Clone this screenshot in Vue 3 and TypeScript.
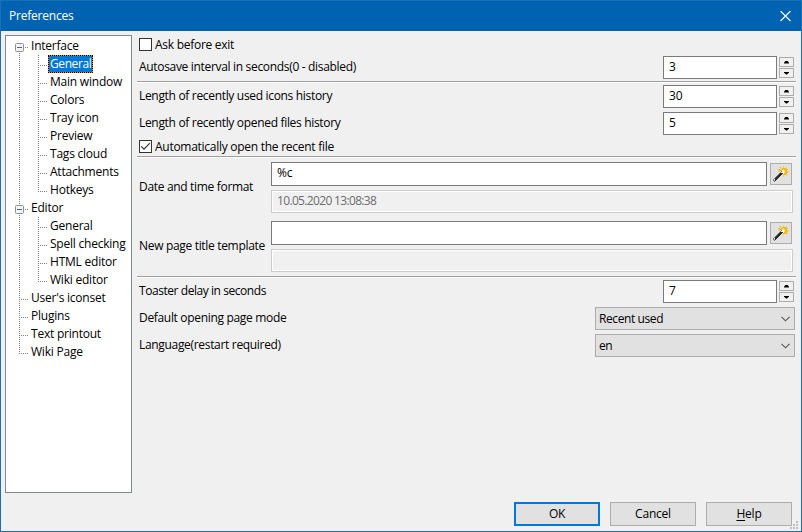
<script setup lang="ts">
interface TreeItem {
  label: string
  level: 1 | 2
  expandable?: boolean
  selected?: boolean
  lastChild?: boolean
  lastRoot?: boolean
  first?: boolean
}

const items: TreeItem[] = [
  { label: 'Interface', level: 1, expandable: true, first: true },
  { label: 'General', level: 2, selected: true },
  { label: 'Main window', level: 2 },
  { label: 'Colors', level: 2 },
  { label: 'Tray icon', level: 2 },
  { label: 'Preview', level: 2 },
  { label: 'Tags cloud', level: 2 },
  { label: 'Attachments', level: 2 },
  { label: 'Hotkeys', level: 2, lastChild: true },
  { label: 'Editor', level: 1, expandable: true },
  { label: 'General', level: 2 },
  { label: 'Spell checking', level: 2 },
  { label: 'HTML editor', level: 2 },
  { label: 'Wiki editor', level: 2, lastChild: true },
  { label: "User's iconset", level: 1 },
  { label: 'Plugins', level: 1 },
  { label: 'Text printout', level: 1 },
  { label: 'Wiki Page', level: 1, lastRoot: true },
]

const templates = [
  { label: 'Date and time format', value: '%c', preview: '10.05.2020 13:08:38' },
  { label: 'New page title template', value: '', preview: '' },
]

const selects = [
  { label: 'Default opening page mode', value: 'Recent used' },
  { label: 'Language(restart required)', value: 'en' },
]

const wand: [string, string][] = [
  ['#f5cf62', 'M10 0h1v2h-1zM6 1h1v1h-1zM13 1h1v2h-1zM5 5h2v1h-2zM14 5h2v1h-2zM13 8h1v2h-1zM10 9h1v2h-1zM7 2h1v1h-1zM14 8h1v1h-1z'],
  ['#f2b718', 'M7 1h1v1h-1zM9 2h3v1h-3zM8 3h2v1h-2zM11 3h3v1h-3zM7 4h2v1h-2zM12 4h2v1h-2zM12 5h2v1h-2zM12 6h3v1h-3zM11 7h3v1h-3zM10 8h3v1h-3zM12 2h1v1h-1zM14 3h1v1h-1zM5 3h2v1h-2zM6 4h1v1h-1z'],
  ['#ffe682', 'M10 3h1v1h-1zM9 4h3v1h-3zM11 5h1v2h-1z'],
  ['#777', 'M8 5h1v1h-1zM7 6h1v1h-1zM6 7h1v1h-1zM5 8h1v1h-1zM4 9h1v1h-1zM3 10h1v1h-1zM2 11h1v1h-1zM1 12h1v1h-1zM0 13h1v2h-1zM1 15h1v1h-1z'],
  ['#2b2b2b', 'M7 7h1v1h-1zM6 8h3v1h-3zM5 9h3v1h-3zM4 10h3v1h-3zM3 11h3v1h-3zM2 12h3v1h-3zM2 13h2v1h-2zM2 14h1v1h-1zM8 7h2v1h-2z'],
  ['#fff', 'M9 5h2v2h-2zM8 6h1v1h-1zM10 7h1v1h-1zM1 13h1v1h-1z'],
  ['#aaa', 'M1 14h1v1h-1z'],
]
</script>

<template>
  <div class="window">
    <header class="titlebar">
      <span>Preferences</span>
      <svg width="11" height="11" viewBox="0 0 11 11"><path d="M.5 0l10 10M10.5 0l-10 10" stroke="#fff" stroke-width="1.1" /></svg>
    </header>
    <main class="body">
      <nav class="tree">
        <div v-for="(item, i) in items" :key="i" class="node">
          <svg class="lines" :width="item.level === 2 ? 42 : 23" height="18">
            <path v-if="!item.first" class="dots" :d="`M13.5 0V${item.lastRoot ? 11 : 18}`" />
            <path v-else class="dots" d="M13.5 16V18" />
            <template v-if="item.level === 2">
              <path class="dots" :d="`M32.5 0V${item.lastChild ? 11 : 18}`" />
              <path class="dots" d="M34 10.5H42" />
            </template>
            <path v-else class="dots" d="M15 10.5H23" />
            <g v-if="item.expandable">
              <rect x="9.5" y="6.5" width="8" height="8" rx="1" fill="#f4f4f4" stroke="#919191" />
              <path d="M11 10.5h5" stroke="#4b63a7" />
            </g>
          </svg>
          <span class="name" :class="{ selected: item.selected }">{{ item.label }}</span>
        </div>
      </nav>

      <section class="panel">
        <label class="check"><i class="box"></i>Ask before exit</label>
        <div class="row first-row">
          <span class="label">Autosave interval in seconds(0 - disabled)</span>
          <div class="spin"><div class="field">3</div><div class="arrows"><b class="up"></b><b class="down"></b></div></div>
        </div>
        <hr />
        <div class="row">
          <span class="label">Length of recently used icons history</span>
          <div class="spin"><div class="field">30</div><div class="arrows"><b class="up"></b><b class="down"></b></div></div>
        </div>
        <div class="row">
          <span class="label">Length of recently opened files history</span>
          <div class="spin"><div class="field">5</div><div class="arrows"><b class="up"></b><b class="down"></b></div></div>
        </div>
        <label class="check second">
          <i class="box"><svg width="11" height="11" viewBox="0 0 11 11"><path d="M1.2 5.3l2.8 2.8L9.8 2.2" fill="none" stroke="#333" stroke-width="1.2" /></svg></i>Automatically open the recent file
        </label>
        <hr />
        <div v-for="t in templates" :key="t.label" class="template">
          <span class="caption label">{{ t.label }}</span>
          <div class="inputs">
            <div class="edit">
              <div class="field">{{ t.value }}</div>
              <button class="wand">
                <svg width="16" height="16" viewBox="0 0 16 16" shape-rendering="crispEdges">
                  <path v-for="[color, d] in wand" :key="color" :fill="color" :d="d" />
                </svg>
              </button>
            </div>
            <div class="preview">{{ t.preview }}</div>
          </div>
        </div>
        <hr class="after-templates" />
        <div class="row">
          <span class="label tight">Toaster delay in seconds</span>
          <div class="spin"><div class="field">7</div><div class="arrows"><b class="up"></b><b class="down"></b></div></div>
        </div>
        <div v-for="s in selects" :key="s.label" class="row">
          <span class="label">{{ s.label }}</span>
          <div class="select">
            <span>{{ s.value }}</span>
            <svg width="9" height="6" viewBox="0 0 9 6"><path d="M.5.8l4 4 4-4" fill="none" stroke="#555" stroke-width="1.1" /></svg>
          </div>
        </div>
      </section>
    </main>
    <footer class="actions">
      <button class="btn primary">OK</button>
      <button class="btn">Cancel</button>
      <button class="btn"><span><u>H</u>elp</span></button>
      <svg class="grip" width="8" height="8" viewBox="0 0 8 8"><path fill="#bfbfbf" d="M6 0h2v2h-2zM3 3h2v2h-2zM6 3h2v2h-2zM0 6h2v2h-2zM3 6h2v2h-2zM6 6h2v2h-2z" /></svg>
    </footer>
  </div>
</template>

<style>
body {
  margin: 0;
  overflow: hidden;
}
</style>

<style scoped>
* {
  box-sizing: border-box;
}
.window {
  position: relative;
  width: 802px;
  height: 532px;
  display: flex;
  flex-direction: column;
  border: 1px solid #1a6fb5;
  background: #f0f0f0;
  color: #000;
  font: 12px/18px "Open Sans", "Noto Sans", sans-serif;
  letter-spacing: -0.22px;
  white-space: nowrap;
}
.titlebar {
  height: 30px;
  flex: none;
  display: flex;
  align-items: center;
  justify-content: space-between;
  padding: 0 10px 0 8px;
  background: #0063b1;
  color: #fff;
}
.body {
  flex: 1;
  display: flex;
  min-height: 0;
  padding: 4px 5px 0 4px;
  gap: 5px;
}
.tree {
  width: 127px;
  height: 458px;
  flex: none;
  padding-top: 1px;
  border: 1px solid #828790;
  background: #fff;
}
.node {
  display: flex;
  height: 18px;
}
.lines {
  flex: none;
}
.dots {
  fill: none;
  stroke: #808080;
  stroke-dasharray: 1 1;
}
.name {
  padding: 0 2px;
  height: 18px;
  line-height: 17px;
}
.selected {
  padding: 0 1px;
  border: 1px solid #ff8728;
  outline: 1px dotted #000;
  outline-offset: -1px;
  line-height: 15px;
  background: #0078d7;
  color: #fff;
  letter-spacing: -0.4px;
}
.panel {
  flex: 1;
  min-width: 0;
}
.check {
  display: flex;
  align-items: center;
  gap: 3px;
  height: 19px;
  padding-left: 2px;
  letter-spacing: -0.27px;
}
.second {
  margin-top: -2px;
}
.box {
  width: 13px;
  height: 13px;
  display: flex;
  border: 1px solid #333;
  background: #fff;
}
.row {
  height: 23px;
  margin-bottom: 4px;
  display: flex;
  align-items: center;
  justify-content: space-between;
  padding: 0 1px 0 2px;
}
.label {
  padding-bottom: 2px;
  letter-spacing: -0.32px;
}
.tight {
  letter-spacing: -0.44px;
}
.first-row {
  margin: 2px 0 2px;
}
hr {
  height: 2px;
  margin: 0 0 2px;
  border: 0;
  border-top: 1px solid #a0a0a0;
  border-bottom: 1px solid #fff;
}
.spin {
  display: flex;
  gap: 2px;
  padding-right: 1px;
}
.field {
  width: 114px;
  height: 23px;
  padding: 1px 5px;
  border: 1px solid #7a7a7a;
  background: #fff;
}
.arrows {
  display: flex;
  flex-direction: column;
  gap: 1px;
  padding-top: 1px;
}
.arrows b {
  width: 15px;
  height: 10px;
  display: flex;
  align-items: center;
  justify-content: center;
  border: 1px solid #acacac;
  background: #f0f0f0;
}
.arrows b::before {
  content: "";
  width: 5px;
  height: 3px;
  background: #000;
}
.arrows .up::before {
  clip-path: polygon(2px 0, 3px 0, 5px 2px, 5px 3px, 0 3px, 0 2px);
}
.arrows .down::before {
  clip-path: polygon(0 0, 5px 0, 5px 1px, 3px 3px, 2px 3px, 0 1px);
}
.template {
  display: flex;
  align-items: center;
  height: 51px;
  margin-top: 4px;
  padding-left: 2px;
}
.template + .template {
  margin-top: 8px;
}
.after-templates {
  margin-top: 4px;
}
.caption {
  width: 132px;
}
.inputs {
  display: flex;
  flex-direction: column;
  gap: 4px;
}
.edit {
  display: flex;
  align-items: center;
  gap: 3px;
}
.edit .field {
  width: 496px;
  height: 24px;
}
.wand {
  width: 22px;
  height: 22px;
  padding: 2px;
  border: 1px solid #adadad;
  background: #e1e1e1;
}
.wand svg {
  display: block;
}
.preview {
  width: 522px;
  height: 23px;
  padding: 1px 5px 0;
  border: 1px solid #ccc;
  box-shadow: inset 0 0 0 1px #fff;
  color: #6d6d6d;
  letter-spacing: -0.66px;
}
.select {
  width: 200px;
  height: 23px;
  display: flex;
  align-items: center;
  justify-content: space-between;
  padding: 0 4px 0 3px;
  border: 1px solid #adadad;
  background: #e1e1e1;
  letter-spacing: -0.4px;
}
.actions {
  height: 29px;
  flex: none;
  display: flex;
  justify-content: flex-end;
  gap: 10px;
  padding-right: 9px;
}
.btn {
  width: 86px;
  height: 24px;
  padding: 0;
  border: 1px solid #adadad;
  background: #e1e1e1;
  color: #000;
  font: inherit;
  letter-spacing: inherit;
}
.primary {
  border: 2px solid #0078d7;
}
u {
  text-underline-offset: 2px;
}
.grip {
  position: absolute;
  right: 3px;
  bottom: 2px;
}
</style>
